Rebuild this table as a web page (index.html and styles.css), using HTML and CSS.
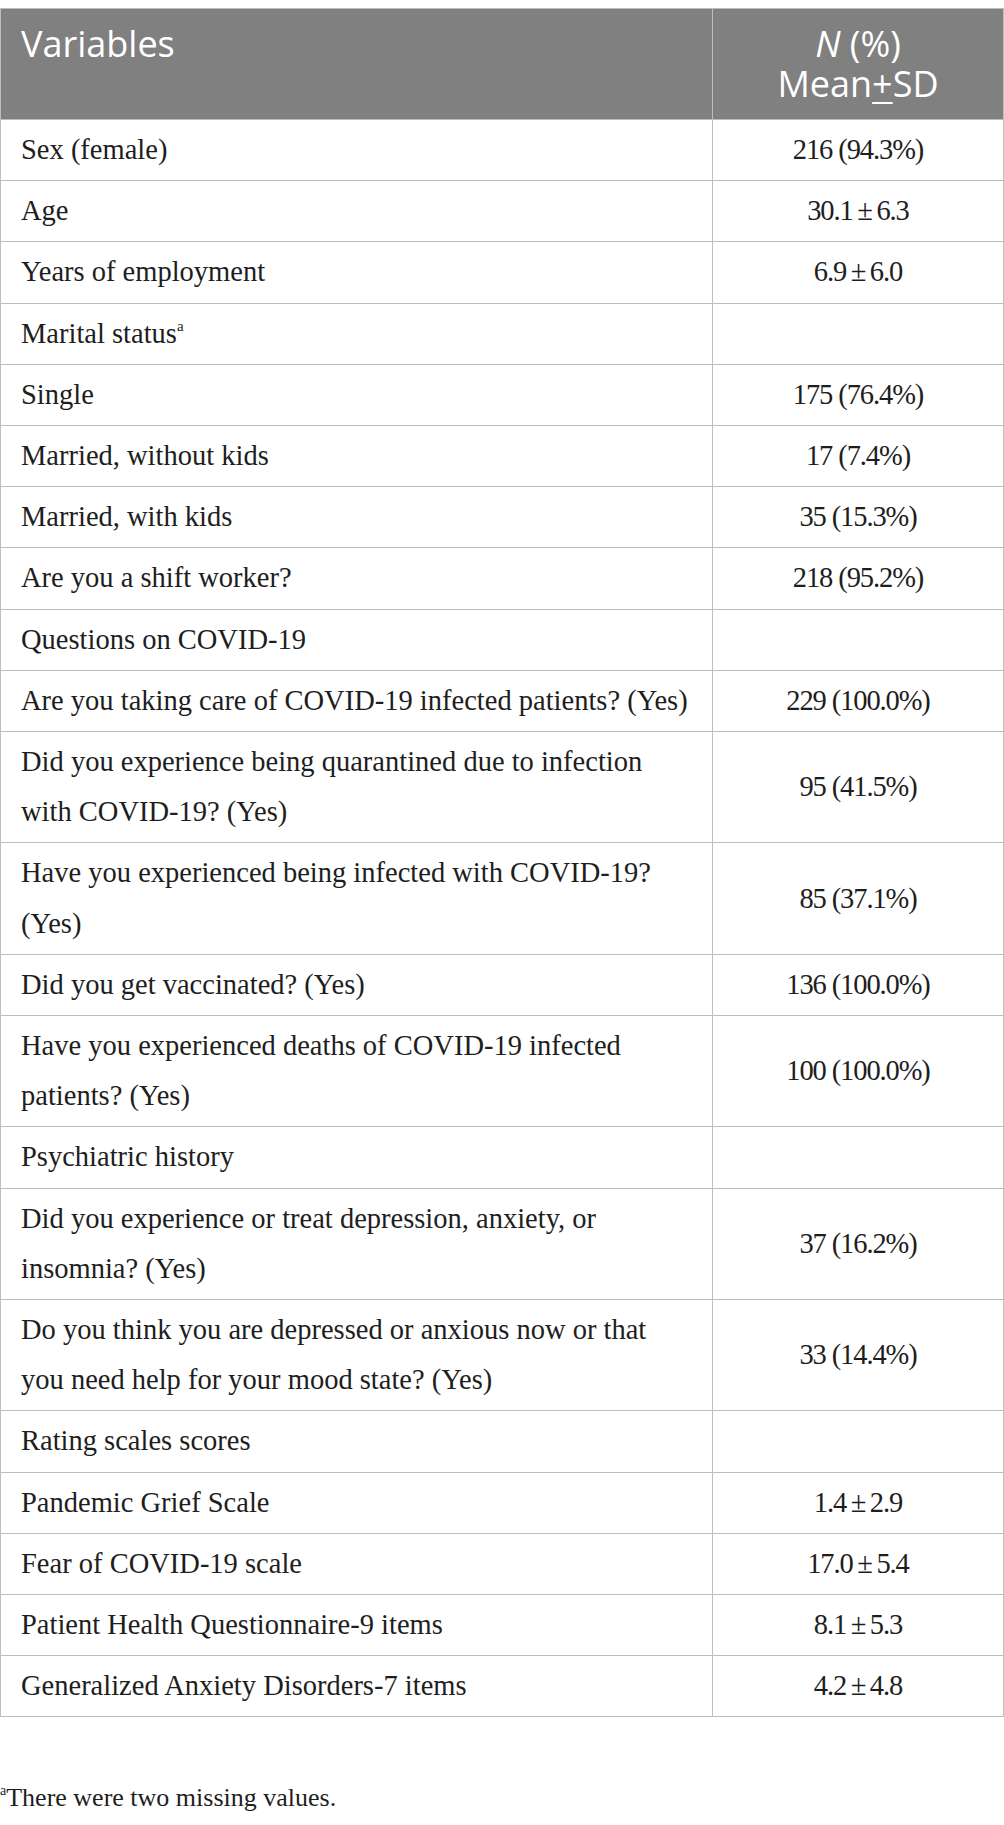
FILE: index.html
```html
<!DOCTYPE html>
<html lang="en">
<head>
<meta charset="utf-8">
<title>Table</title>
<link rel="stylesheet" href="styles.css">
</head>
<body>
<div class="page">
<table class="data">
<thead>
<tr><th class="var">Variables</th><th class="val"><span class="hl"><i>N</i> (%)</span><span class="hl">Mean<u>+</u>SD</span></th></tr>
</thead>
<tbody>
<tr><td>Sex (female)</td><td class="num">216 (94.3%)</td></tr>
<tr><td>Age</td><td class="num">30.1&#8201;±&#8201;6.3</td></tr>
<tr><td>Years of employment</td><td class="num">6.9&#8201;±&#8201;6.0</td></tr>
<tr><td>Marital status<sup>a</sup></td><td class="num"></td></tr>
<tr><td>Single</td><td class="num">175 (76.4%)</td></tr>
<tr><td>Married, without kids</td><td class="num">17 (7.4%)</td></tr>
<tr><td>Married, with kids</td><td class="num">35 (15.3%)</td></tr>
<tr><td>Are you a shift worker?</td><td class="num">218 (95.2%)</td></tr>
<tr><td>Questions on COVID-19</td><td class="num"></td></tr>
<tr><td>Are you taking care of COVID-19 infected patients? (Yes)</td><td class="num">229 (100.0%)</td></tr>
<tr><td>Did you experience being quarantined due to infection with COVID-19? (Yes)</td><td class="num">95 (41.5%)</td></tr>
<tr><td>Have you experienced being infected with COVID-19? (Yes)</td><td class="num">85 (37.1%)</td></tr>
<tr><td>Did you get vaccinated? (Yes)</td><td class="num">136 (100.0%)</td></tr>
<tr><td>Have you experienced deaths of COVID-19 infected patients? (Yes)</td><td class="num">100 (100.0%)</td></tr>
<tr><td>Psychiatric history</td><td class="num"></td></tr>
<tr><td>Did you experience or treat depression, anxiety, or insomnia? (Yes)</td><td class="num">37 (16.2%)</td></tr>
<tr><td>Do you think you are depressed or anxious now or that you need help for your mood state? (Yes)</td><td class="num">33 (14.4%)</td></tr>
<tr><td>Rating scales scores</td><td class="num"></td></tr>
<tr><td>Pandemic Grief Scale</td><td class="num">1.4&#8201;±&#8201;2.9</td></tr>
<tr><td>Fear of COVID-19 scale</td><td class="num">17.0&#8201;±&#8201;5.4</td></tr>
<tr><td>Patient Health Questionnaire-9 items</td><td class="num">8.1&#8201;±&#8201;5.3</td></tr>
<tr><td>Generalized Anxiety Disorders-7 items</td><td class="num">4.2&#8201;±&#8201;4.8</td></tr>
</tbody>
</table>
<p class="foot"><sup>a</sup>There were two missing values.</p>
</div>
</body>
</html>
```
FILE: styles.css
```css
html, body { margin: 0; padding: 0; background: #fff; }
.page { padding-top: 8px; }
.data {
  width: 1004px;
  border-collapse: collapse;
  table-layout: fixed;
  font-family: "Liberation Serif", "Times New Roman", serif;
  font-size: 28.5px;
  color: #1e1e1e;
}
.data th, .data td {
  border: 1px solid #bdbdbd;
}
.data th {
  background: #808080;
  color: #fff;
  font-family: "Open Sans", "Noto Sans", sans-serif;
  font-weight: 400;
  font-size: 36px;
  line-height: 40px;
  padding: 15px 20px 15px;
  vertical-align: top;
}
.data th.var { text-align: left; width: 674px; padding-right: 17px; }
.data th.val { text-align: center; padding-left: 10px; padding-right: 10px; }
.data th .hl { display: block; height: 40px; }
.data th u { text-decoration-thickness: 2px; text-underline-offset: 5px; }
.data td {
  padding: 5px 17px 5px 20px;
  line-height: 50.2px;
  text-align: left;
  vertical-align: middle;
}
.data td.num { text-align: center; padding: 5px 10px; letter-spacing: -1.1px; }
.data sup { font-size: 15px; line-height: 0; vertical-align: 12px; }
.foot {
  margin: 66px 0 0;
  font-family: "Liberation Serif", "Times New Roman", serif;
  font-size: 26px;
  color: #1e1e1e;
}
.foot sup { font-size: 14px; line-height: 0; vertical-align: 11px; }
```
